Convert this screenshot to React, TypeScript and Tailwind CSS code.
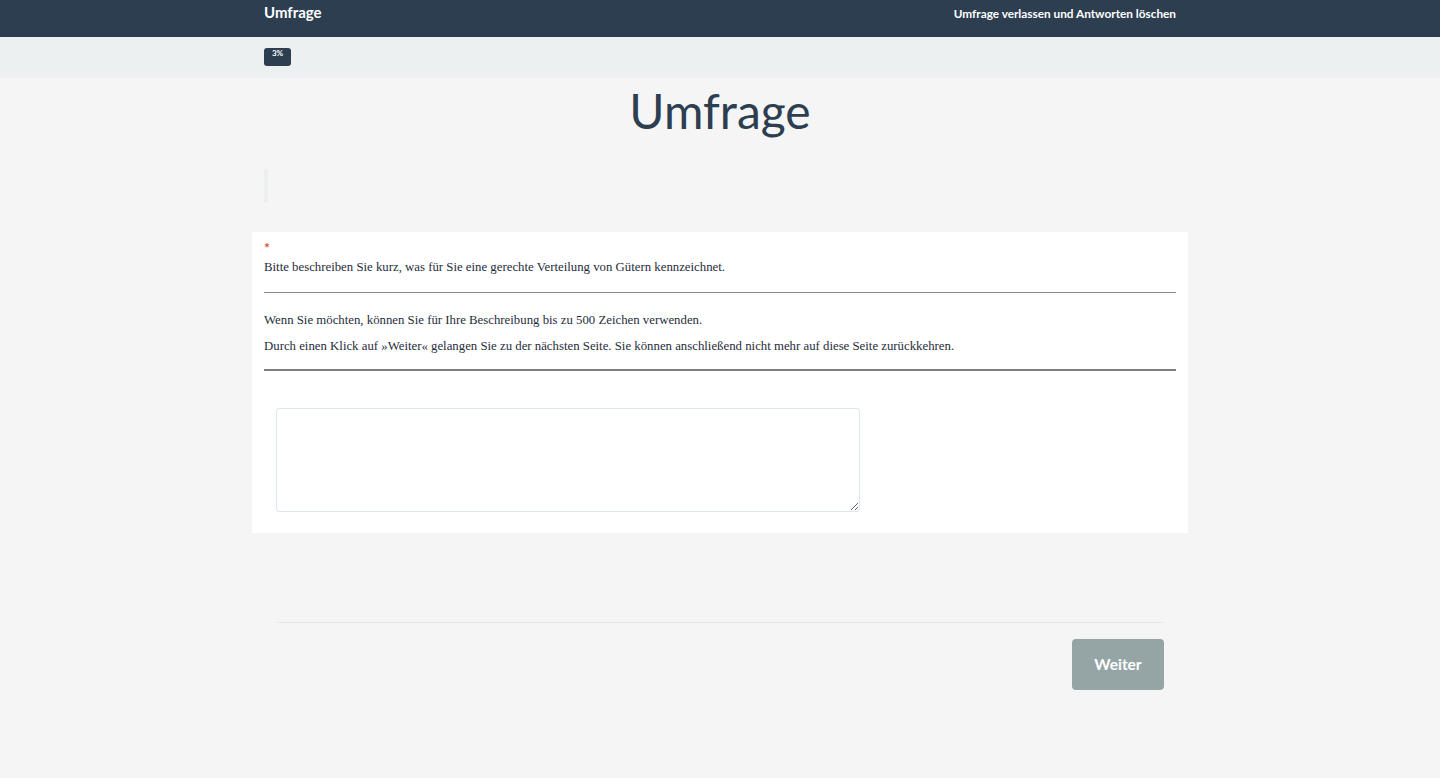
import React from "react";

export default function App() {
  return (
    <div className="min-h-[778px] bg-[#f5f5f5] font-['Lato',sans-serif] text-[#2c3e50]">
      <nav className="h-[37px] bg-[#2c3e50]">
        <div className="mx-auto flex h-full w-[912px] items-start justify-between pt-[3px]">
          <span className="text-[15px] font-bold leading-[18px] text-white">Umfrage</span>
          <span className="pt-[2px] text-[11.8px] font-bold leading-[18px] text-white">Umfrage verlassen und Antworten löschen</span>
        </div>
      </nav>
      <div className="h-[41px] bg-[#ecf0f1]">
        <div className="mx-auto w-[912px] pt-[11px]">
          <div className="flex h-[18px] w-[27px] justify-center rounded-[3px] bg-[#2c3e50] pt-[1px] text-[8px] font-bold leading-[9px] text-white">
            3%
          </div>
        </div>
      </div>
      <h1 className="mt-[5px] text-center text-[48px] leading-[56px] font-normal text-[#2c3e50]">Umfrage</h1>
      <div className="mx-auto mt-[30px] w-[912px]">
        <div className="h-[34px] border-l-4 border-[#eceff0]" />
      </div>
      <div className="mx-auto mt-[29px] w-[936px] bg-white px-[12px] pb-[21px] pt-[9px] font-['Liberation_Serif',serif] text-[12.8px] text-[#1f2d3d]">
        <div className="h-[14px] text-[14px] font-bold font-['Lato',sans-serif] leading-[14px] text-[#e74c3c]">*</div>
        <p className="mt-[3px] leading-[18px]">Bitte beschreiben Sie kurz, was für Sie eine gerechte Verteilung von Gütern kennzeichnet.</p>
        <div className="mt-[16px] h-px bg-[#8a8a8a]" />
        <p className="mt-[18px] leading-[18px]">Wenn Sie möchten, können Sie für Ihre Beschreibung bis zu 500 Zeichen verwenden.</p>
        <p className="mt-[8px] leading-[18px]">Durch einen Klick auf »Weiter« gelangen Sie zu der nächsten Seite. Sie können anschließend nicht mehr auf diese Seite zurückkehren.</p>
        <div className="mt-[14px] h-[2px] bg-[#7e7e7e]" />
        <div className="px-[12px] pt-[37px]">
          <textarea className="block h-[104px] w-[584px] rounded-[3px] border border-[#dce4ec] bg-white outline-none" />
        </div>
      </div>
      <div className="mx-auto mt-[89px] w-[887px] border-t border-[#e8e8e8] pl-[1px]" />
      <div className="mx-auto mt-[16px] flex w-[888px] justify-end">
        <button className="h-[51px] w-[92px] rounded-[4px] bg-[#95a5a6] text-[15.5px] font-bold text-white">Weiter</button>
      </div>
    </div>
  );
}
